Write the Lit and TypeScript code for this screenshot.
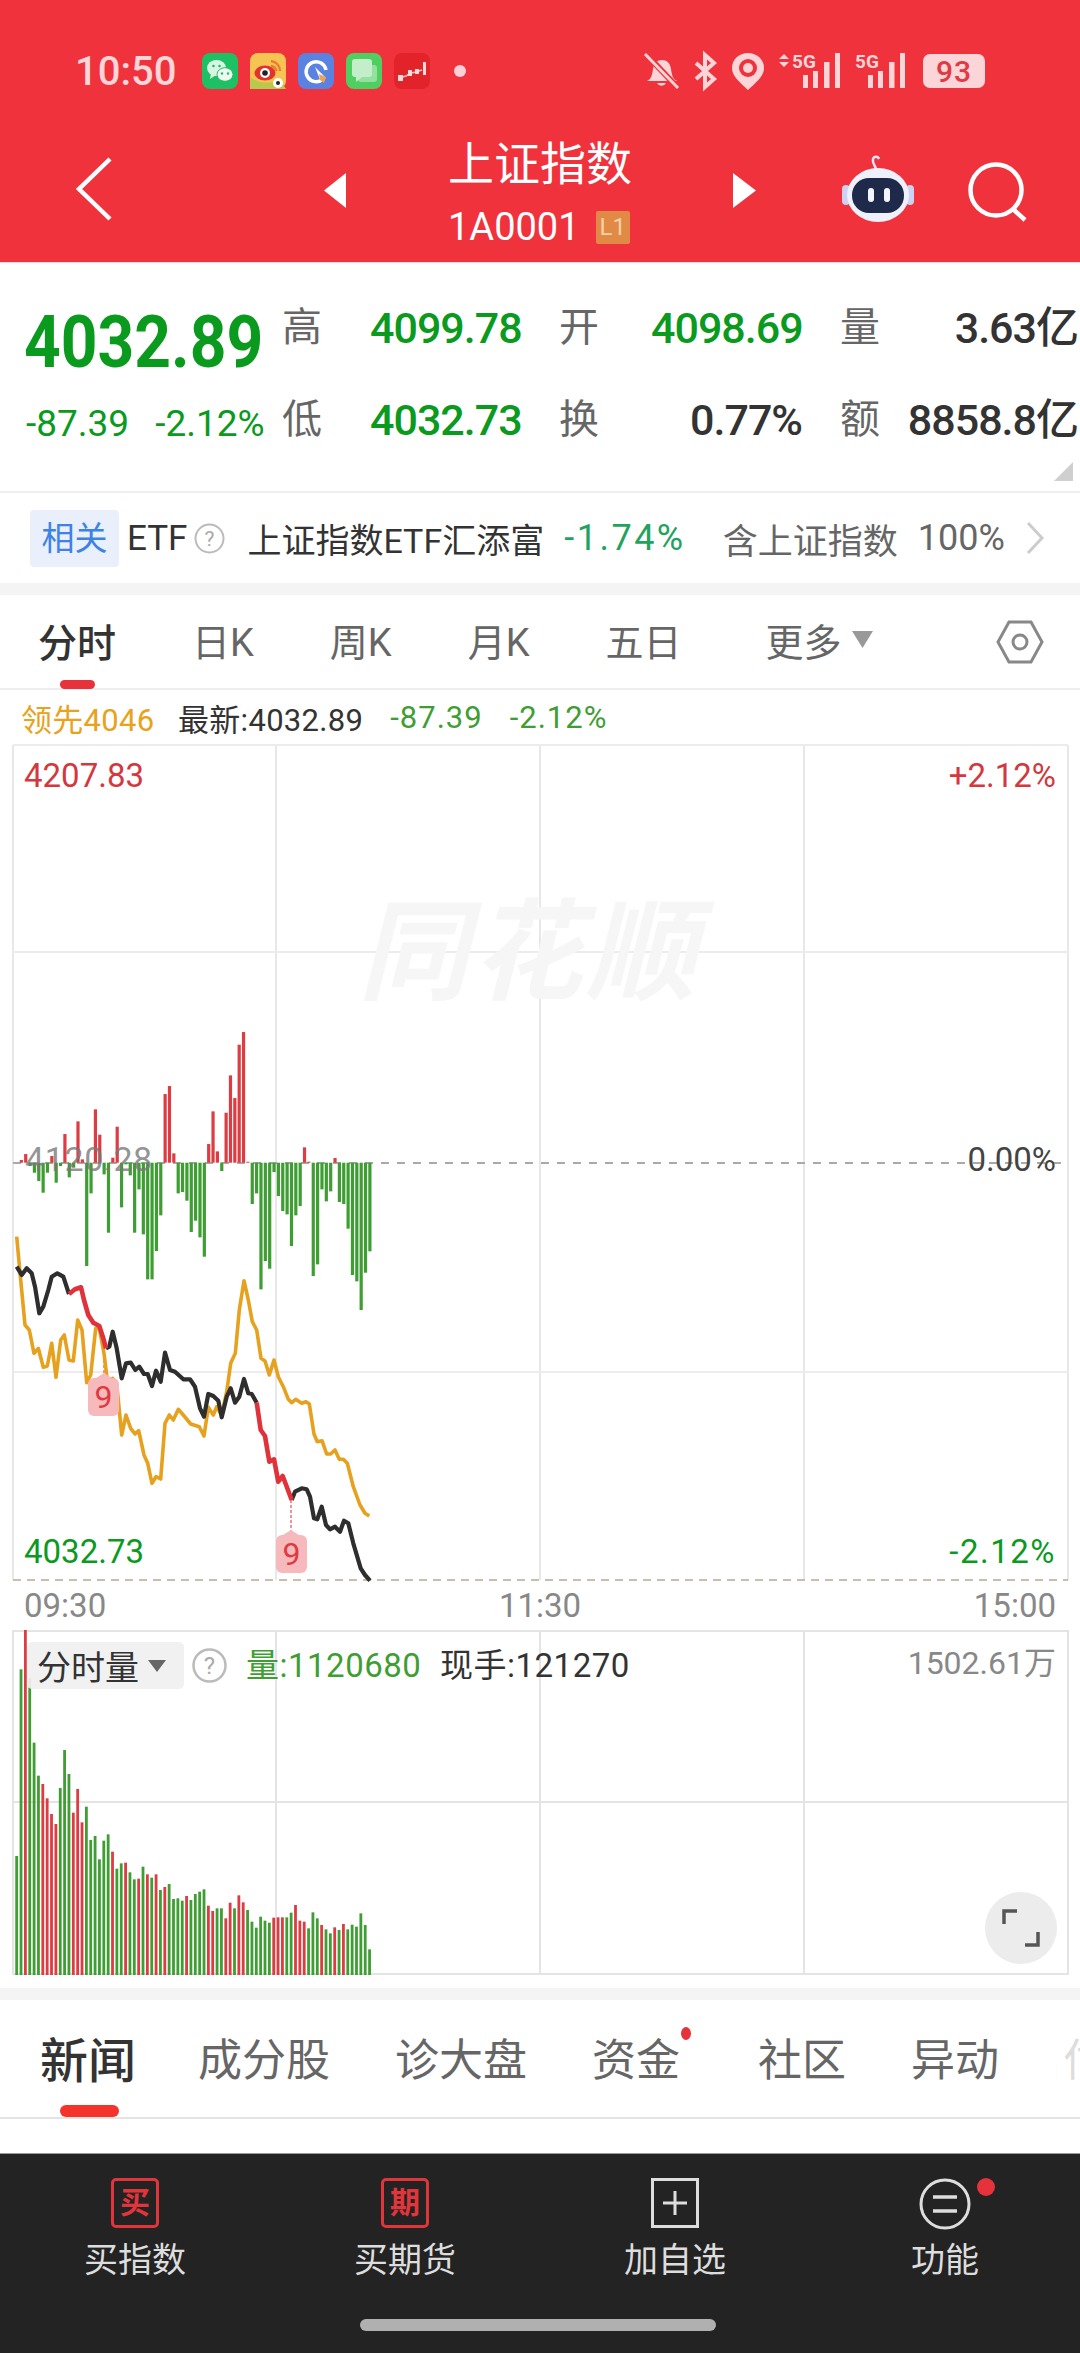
import { LitElement, html, svg, css } from 'lit';
import { customElement } from 'lit/decorators.js';

const RED = '#dc3c42';
const GREEN = '#3f9e33';

// diff bars: height in 3x zoom px, + is red, - is green
const DIFF = [0, 8, 26, -10, -30, -55, -90, -30, 20, -60, -10, 86, -44, -15, 124, 10, -310, -92, 160, 84, -35, -210, 15, 108, -134, -5, -38, -210, -80, -215, -350, -350, -265, -158, 206, 230, 28, -92, -88, -114, -208, -174, -224, -282, 56, 154, 34, -25, 150, 262, 194, 354, 392, 3, -124, -92, -380, -295, -318, -28, -100, -145, -155, -250, -158, -130, 46, 3, -340, -305, -80, -116, -86, 14, -118, -124, -198, -337, -356, -442, -330, -266];

// volume bars: top in 3x zoom px, r flags red
const VOL: [number, number][] = [[768,0],[208,0],[90,1],[235,0],[428,0],[527,0],[552,1],[595,1],[642,1],[672,1],[564,0],[450,0],[522,0],[638,1],[567,1],[667,1],[620,0],[720,0],[708,0],[778,0],[722,0],[703,0],[755,1],[806,0],[790,0],[788,1],[817,0],[838,0],[836,1],[800,0],[823,1],[833,0],[823,1],[870,0],[861,1],[852,0],[897,0],[895,0],[902,0],[888,1],[900,0],[882,0],[875,0],[868,0],[917,1],[933,1],[925,0],[925,0],[955,1],[908,1],[925,0],[886,1],[907,1],[930,0],[965,0],[983,0],[950,0],[962,0],[968,0],[953,1],[952,1],[952,1],[952,0],[938,0],[915,1],[962,1],[965,1],[985,0],[937,0],[955,0],[975,1],[988,0],[1000,0],[982,1],[990,0],[972,1],[988,0],[974,0],[980,0],[940,0],[975,0],[1048,0]];

const BLACK_A = '50,-40 65,-15 80,-35 95,-20 105,20 118,100 130,80 145,30 155,-10 172,-20 190,-10 207,42';
const RED_A = '207,42 225,28 243,22 252,60 265,105 280,128 298,138 310,175 318,205';
const BLACK_B = '318,205 328,200 338,155 350,205 365,295 378,250 392,248 406,270 418,260 432,282 443,282 456,318 468,272 482,305 495,218 510,270 525,275 550,298 570,298 585,320 600,385 612,410 625,342 640,348 655,362 665,412 680,350 692,325 705,368 718,350 732,297 745,340 755,342 770,368';
const RED_B = '770,368 782,450 795,468 808,545 822,538 835,605 848,588 875,660';
const BLACK_C = '875,660 885,635 905,625 920,628 930,650 942,715 952,718 965,680 978,735 990,748 1005,740 1020,755 1032,722 1045,730 1060,790 1082,865 1095,885 1110,902';
const LEAD = '50,-130 62,0 75,135 88,150 102,220 115,205 130,262 142,258 155,190 168,292 182,180 193,165 207,240 220,243 233,120 246,150 260,308 272,285 287,145 298,145 312,220 325,325 338,295 350,310 365,465 378,405 392,445 405,462 416,452 432,525 443,550 456,610 468,590 482,597 495,430 508,405 520,420 535,388 550,405 572,432 598,440 612,468 625,382 640,405 650,380 665,405 680,335 692,250 706,220 718,90 732,2 745,60 757,125 770,150 783,235 795,243 808,285 822,240 835,290 850,320 865,358 875,368 887,358 905,370 918,365 928,372 942,462 952,485 966,482 980,522 992,522 1005,510 1018,538 1030,538 1042,550 1060,620 1080,675 1095,700 1108,708';

const toPage = (pts: string) =>
  pts.split(' ').map((p) => {
    const [x, y] = p.split(',').map(Number);
    return `${(x / 3).toFixed(1)},${(1280 + y / 3).toFixed(1)}`;
  }).join(' ');

const barX = (i: number) => (51 + 13.07 * i) / 3;

@customElement('app-root')
export class AppRoot extends LitElement {
  static styles = css`
    :host {
      display: block;
      width: 1080px;
      height: 2353px;
      overflow: hidden;
      background: #fff;
      font-family: Roboto, 'Noto Sans CJK SC', sans-serif;
    }
    svg { display: block; overflow: visible; }

    .top { height: 262px; background: #f0323c; border-bottom: 1px solid #f6d9da; }
    .status { height: 142px; display: flex; align-items: center; color: #fbd5d7; position: relative; }
    .clock { margin-left: 75px; width: 127px; font-size: 40px; font-weight: 500; }
    .apps { display: flex; gap: 12px; }
    .dot { width: 12px; height: 12px; border-radius: 50%; background: #fbd0d8; margin-left: 24px; }
    .sys { margin-left: auto; margin-right: 95px; display: flex; align-items: center; gap: 15px; }
    .batt { margin-left: 3px; width: 62px; height: 34px; border-radius: 7px; background: #fbd5d7; color: #e03a42; font-size: 30px; font-weight: 500; text-align: center; line-height: 35px; letter-spacing: 1px; }

    .nav { height: 120px; position: relative; display: flex; align-items: flex-start; color: #fff; }
    .back { margin: 15px 0 0 76px; }
    .arrow-l { margin: 31px 0 0 212px; }
    .title { width: 284px; padding-left: 102px; box-sizing: border-box; margin-left: 0; }
    .name { font-size: 46px; line-height: 46px; margin-top: -1px; white-space: nowrap; }
    .code { display: flex; align-items: center; font-size: 38px; line-height: 38px; margin-top: 21px; white-space: nowrap; }
    .l1 { margin-left: 16px; width: 39px; height: 33px; background: #e08a45; color: #f9d0a8; border-radius: 2px; font-size: 24px; line-height: 33px; text-align: center; }
    .arrow-r { margin: 31px 0 0 103px; }
    .robot { margin: 13px 0 0 86px; }
    .search { margin: 20px 0 0 54px; }

    .quote { height: 230px; box-sizing: border-box; border-bottom: 2px solid #eee; position: relative; display: grid; grid-template-columns: 282px 88px 189px 92px 189px 1fr; grid-template-rows: 92px 92px; padding-top: 19px; align-items: center; }
    .big { display: flex; flex-direction: column; padding-left: 24px; grid-row: 1 / span 2; color: #0a9a1e; }
    .big b { font-size: 72px; line-height: 72px; font-weight: 700; margin-top: 3px; transform: scaleX(.89); transform-origin: left center; }
    .big span { display: flex; gap: 26px; font-size: 37px; line-height: 42px; margin-top: 24px; padding-left: 2px; white-space: nowrap; }
    .big em { font-style: normal; }
    .lbl { font-size: 40px; color: #666; line-height: 48px; }
    .val { font-size: 43px; line-height: 48px; font-weight: 500; letter-spacing: -1px; white-space: nowrap; }
    .up { color: #0a9a1e; }
    .dark { color: #333; }
    .val.end { text-align: right; padding-right: 38px; }
    .vol-cell { display: flex; justify-content: space-between; align-items: center; height: 48px; padding-right: 2px; }
    .corner { position: absolute; right: 7px; bottom: 10px; }

    .etf { height: 90px; display: flex; align-items: center; font-size: 34px; color: #333; white-space: nowrap; }
    .chip { margin-left: 30px; width: 89px; height: 57px; background: #e9f0fc; border-radius: 4px; color: #3d82e6; text-align: center; line-height: 57px; font-size: 33px; }
    .etf .t { margin-left: 8px; font-size: 35px; }
    .etf .q { margin: 0 22px 0 7px; }
    .etf .chg { margin-left: 20px; color: #1fa35e; font-size: 36px; letter-spacing: 2.5px; }
    .etf .sub { margin-left: 37px; color: #666; font-size: 35px; }
    .etf .pct { margin-left: 20px; color: #666; font-size: 36px; }
    .etf .more { margin-left: 21px; }

    .band { height: 12px; background: #f4f4f4; }

    .tabs { height: 95px; box-sizing: border-box; border-bottom: 2px solid #eee; display: flex; align-items: center; position: relative; font-size: 38px; color: #666; padding: 0 0 4px 38px; gap: 76px; }
    .tabs .on { color: #333; font-size: 39px; font-weight: 500; }
    .tabs .more { display: flex; align-items: center; gap: 10px; margin-left: 8px; }
    .bar { position: absolute; background: #e6323a; border-radius: 5px; }
    .tabs .bar { left: 60px; bottom: -1px; width: 35px; height: 9px; }
    .tabs .gear { position: absolute; left: 997px; top: 24px; }

    .legend { height: 55px; display: flex; align-items: center; font-size: 31px; padding-left: 21px; color: #333; white-space: nowrap; letter-spacing: 0.3px; }
    .legend .lead { color: #e8a21c; width: 157px; }
    .legend .g { color: #3f9e33; margin-left: 27px; letter-spacing: 1px; }

    .chart { position: relative; }
    .mark { position: absolute; font-size: 33px; line-height: 38px; white-space: nowrap; }
    .mark.r { right: 24px; }
    .mark.l { left: 24px; }
    .hi { color: #d2383e; }
    .lo { color: #0a9a1e; }
    .mark.spread { letter-spacing: 1.5px; }
    .zero { color: #444; top: 396px; }
    .open { left: 25px; top: 395px; font-size: 34px; color: rgba(120, 120, 120, .8); letter-spacing: 0.6px; }
    .wm { position: absolute; left: 358px; top: 147px; font-size: 110px; line-height: 124px; font-weight: 700; font-style: italic; color: #f6f6f6; letter-spacing: 4px; }
    .badge { position: absolute; width: 31px; height: 38px; background: #f6babc; border-radius: 6px; color: #e0393f; font-size: 32px; line-height: 38px; text-align: center; }

    .times { height: 49px; display: flex; justify-content: space-between; align-items: center; padding: 0 24px; font-size: 33px; color: #888; }

    .chart .pick { position: absolute; left: 27px; top: 12px; width: 157px; height: 47px; box-sizing: border-box; background: rgba(240, 240, 240, .92); border-radius: 5px; display: flex; align-items: center; padding-left: 10px; gap: 9px; font-size: 34px; color: #333; }
    .chart .help { position: absolute; left: 192px; top: 18px; }
    .chart .stat { position: absolute; top: 16px; font-size: 33px; line-height: 40px; white-space: nowrap; letter-spacing: 0.5px; }
    .chart .max { right: 24px; color: #888; font-size: 32px; letter-spacing: 0; top: 13px; }
    .chart .zoom { position: absolute; left: 985px; top: 262px; width: 72px; height: 72px; border-radius: 50%; background: #ececec; display: flex; align-items: center; justify-content: center; }

    .pad { height: 12px; }
    .news { height: 119px; box-sizing: border-box; border-bottom: 2px solid #e4e4e4; position: relative; display: flex; align-items: center; font-size: 44px; color: #666; white-space: nowrap; padding: 0 0 3px 40px; overflow: hidden; }
    .news .on { font-size: 48px; font-weight: 500; color: #333; margin-right: 62px; }
    .news .bar { left: 60px; bottom: 0; width: 59px; height: 12px; background: #f5332d; border-radius: 6px; }
    .news span { margin-right: 65px; }
    .news .fund { position: relative; margin-right: 78px; }
    .news .fund i { position: absolute; left: 89px; top: 2px; width: 10px; height: 13px; background: #e6323a; border-radius: 50%; }
    .news .fade { color: #ddd; margin: 0; }
    .gap { height: 34px; }

    .dock { height: 200px; background: #232323; position: relative; display: grid; grid-template-columns: repeat(4, 270px); border-top: 1px solid #999; box-sizing: border-box; }
    .item { display: flex; flex-direction: column; align-items: center; color: #ddd; font-size: 34px; line-height: 40px; }
    .ic { height: 56px; margin-top: 24px; margin-bottom: 6px; position: relative; }
    .box { box-sizing: border-box; width: 48px; height: 50px; border: 3px solid #e0353b; border-radius: 5px; color: #e0353b; font-size: 30px; line-height: 43px; font-weight: 700; text-align: center; }
    .red-dot { position: absolute; left: 58px; top: 0; width: 18px; height: 18px; border-radius: 50%; background: #e6323a; }
    .home { position: absolute; left: 360px; top: 165px; width: 356px; height: 12px; border-radius: 6px; background: #b0b0b0; }
  `;

  private _apps() {
    return html`<div class="apps">
      <svg width="36" height="36" viewBox="0 0 36 36"><rect width="36" height="36" rx="8" fill="#1ec064"/><ellipse cx="14.500" cy="15" rx="9.500" ry="8" fill="#d9f5e2"/><path d="M9 20 8 26 14 22z" fill="#d9f5e2"/><ellipse cx="23" cy="21.500" rx="8" ry="6.800" fill="#eefaf1" stroke="#1ec064"/><circle cx="11.500" cy="13" r="1.300" fill="#1ec064"/><circle cx="17.500" cy="13" r="1.300" fill="#1ec064"/><circle cx="20" cy="20.500" r="1.200" fill="#1ec064"/><circle cx="26" cy="20.500" r="1.200" fill="#1ec064"/></svg>
      <svg width="36" height="36" viewBox="0 0 36 36"><rect width="36" height="36" rx="8" fill="#f6c453"/><path d="M0 24C8 30 20 32 30 26L36 36H0Z" fill="#b8c94e"/><path d="M21 8a10 10 0 0 1 9 10M21 13a5 5 0 0 1 5 5" stroke="#ef7b2e" stroke-width="2.400" fill="none"/><ellipse cx="15" cy="20" rx="10.500" ry="7.500" fill="#e4332d"/><circle cx="15" cy="20" r="5" fill="#fff"/><circle cx="15" cy="20" r="2.800" fill="#222"/><circle cx="28" cy="30" r="5" fill="#fff"/><circle cx="28" cy="30" r="2" fill="#222"/></svg>
      <svg width="36" height="36" viewBox="0 0 36 36"><rect width="36" height="36" rx="8" fill="#5a82e0"/><path d="M25 26a10 10 0 1 1 3-9" fill="none" stroke="#fff" stroke-width="3.500"/><path d="M17 14 28 25 23 29z" fill="#fff"/><path d="M21 21 28 24 26 30 22 27z" fill="#eda451"/></svg>
      <svg width="36" height="36" viewBox="0 0 36 36"><rect width="36" height="36" rx="8" fill="#4fcf5f"/><rect x="12" y="12" width="19" height="17" rx="3" fill="#93e0a0"/><rect x="6" y="6" width="20" height="18" rx="3" fill="#c3eec9"/><path d="M10 24v5l6-5z" fill="#c3eec9"/></svg>
      <svg width="36" height="36" viewBox="0 0 36 36"><rect width="36" height="36" rx="8" fill="#e3232a"/><path d="M5 25 12 23 17 20 22 19 28 17" stroke="#f6c2c2" stroke-width="1.500" fill="none"/><rect x="4" y="22" width="5" height="6" fill="#fbdcdc"/><rect x="14" y="17" width="4" height="6" fill="#fbdcdc"/><rect x="21" y="16" width="4" height="5" fill="#fbdcdc"/><rect x="29" y="9" width="3" height="13" fill="#fbdcdc"/></svg>
    </div>`;
  }

  private _signal(x: number) {
    const c = '#fbd5d7';
    return svg`<rect x="${x}" y="22" width="5" height="13" fill="${c}"/><rect x="${x + 10}" y="18" width="5" height="17" fill="${c}"/><rect x="${x + 21}" y="9" width="5.500" height="26" fill="${c}"/><rect x="${x + 32}" y="0" width="5" height="35" fill="${c}"/>`;
  }

  private _sysIcons() {
    const c = '#fbd5d7';
    return html`<div class="sys">
      <svg width="35" height="36" viewBox="0 0 35 36" fill="none"><path d="M3 28c4-2 5-5 6-12 1-6 4-9 9-9s8 3 9 9c1 7 2 10 6 12z" fill="${c}"/><path d="M13 30a5 5 0 0 0 9 0z" fill="${c}"/><path d="M1 0 34 35" stroke="#f0323c" stroke-width="6"/><path d="M1 1 34 35" stroke="${c}" stroke-width="3"/></svg>
      <svg width="23" height="36" viewBox="0 0 23 36" fill="none"><path d="M2 10 20 26 11 34V2l9 8L2 26" stroke="${c}" stroke-width="4"/></svg>
      <svg width="32" height="37" viewBox="0 0 32 37"><path d="M16 0C7 0 0 6.500 0 15c0 9 9 15 16 22C23 30 32 24 32 15 32 6.500 25 0 16 0z" fill="${c}"/><circle cx="16" cy="15" r="9" fill="#f0323c"/><circle cx="16" cy="15" r="5" fill="${c}"/></svg>
      <svg width="61" height="36" viewBox="0 0 61 36"><path d="M0 6 5 1 10 6zM0 9 5 14 10 9z" fill="${c}"/><text x="13" y="15" font-size="19" font-weight="700" fill="${c}" font-family="Roboto">5G</text>${this._signal(24)}</svg>
      <svg width="50" height="36" viewBox="0 0 50 36"><text x="0" y="15" font-size="19" font-weight="700" fill="${c}" font-family="Roboto">5G</text>${this._signal(13)}</svg>
      <div class="batt">93</div>
    </div>`;
  }

  private _priceSvg() {
    const vx = [13, 276, 540, 804, 1068];
    const hy = [745, 952, 1372];
    return html`<svg width="1080" height="836" viewBox="0 745 1080 836">
      ${vx.map((x) => svg`<line x1="${x}" y1="745" x2="${x}" y2="1580" stroke="#e8e8e8" stroke-width="2"/>`)}
      ${hy.map((y) => svg`<line x1="13" y1="${y}" x2="1068" y2="${y}" stroke="#ececec" stroke-width="2"/>`)}
      <line x1="13" y1="1163" x2="1068" y2="1163" stroke="#aaa" stroke-width="2" stroke-dasharray="8 8"/>
      <line x1="13" y1="1580" x2="1068" y2="1580" stroke="#c9bdb0" stroke-width="2" stroke-dasharray="8 6"/>
      ${DIFF.map((d, i) => d === 0 ? null : svg`<rect x="${barX(i) - 1.6}" y="${d > 0 ? 1162.7 - d / 3 : 1162.7}" width="3.2" height="${Math.abs(d) / 3}" fill="${d > 0 ? RED : GREEN}"/>`)}
      <line x1="104" y1="1350" x2="104" y2="1378" stroke="#e8707a" stroke-width="1.500" stroke-dasharray="3 2"/>
      <line x1="291" y1="1500" x2="291" y2="1535" stroke="#e8707a" stroke-width="1.500" stroke-dasharray="3 2"/>
      <polyline points="${toPage(LEAD)}" fill="none" stroke="#e6a11f" stroke-width="3.600" stroke-linejoin="round"/>
      ${[BLACK_A, BLACK_B, BLACK_C].map((p) => svg`<polyline points="${toPage(p)}" fill="none" stroke="#2e2e2e" stroke-width="4.200" stroke-linejoin="round"/>`)}
      ${[RED_A, RED_B].map((p) => svg`<polyline points="${toPage(p)}" fill="none" stroke="#e0323a" stroke-width="4.600" stroke-linejoin="round"/>`)}
      <path d="M96 1378 104 1373 112 1378zM283 1535 291 1530 299 1535z" fill="#f6babc"/>
    </svg>`;
  }

  private _volSvg() {
    const vx = [13, 276, 540, 804, 1068];
    return html`<svg width="1080" height="346" viewBox="0 1630 1080 346">
      ${vx.map((x) => svg`<line x1="${x}" y1="1630" x2="${x}" y2="1975" stroke="#e4e4e4" stroke-width="2"/>`)}
      ${[1631, 1802, 1974].map((y) => svg`<line x1="13" y1="${y}" x2="1068" y2="${y}" stroke="#e4e4e4" stroke-width="2"/>`)}
      ${VOL.map(([top, r], i) => svg`<rect x="${(50 + 13.07 * i) / 3 - 1.4}" y="${1600 + top / 3}" width="2.800" height="${(1125 - top) / 3}" fill="${r ? RED : GREEN}"/>`)}
    </svg>`;
  }

  render() {
    return html`
      <div class="top">
        <div class="status">
          <div class="clock">10:50</div>
          ${this._apps()}
          <div class="dot"></div>
          ${this._sysIcons()}
        </div>
        <div class="nav">
          <svg class="back" width="36" height="64" viewBox="0 0 36 64" fill="none"><path d="M34 2 3 32 34 62" stroke="#fff" stroke-width="4.500"/></svg>
          <svg class="arrow-l" width="22" height="35" viewBox="0 0 22 35"><path d="M22 0V35L0 17.500z" fill="#fff"/></svg>
          <div class="title">
            <div class="name">上证指数</div>
            <div class="code">1A0001<span class="l1">L1</span></div>
          </div>
          <svg class="arrow-r" width="23" height="35" viewBox="0 0 23 35"><path d="M0 0V35L23 17.500z" fill="#fff"/></svg>
          <svg class="robot" width="72" height="68" viewBox="0 0 72 68" fill="none">
            <path d="M34 14c-1-4-4-6-3-10 1-3 5-3 6 0" stroke="#e9e4f7" stroke-width="2.500"/>
            <rect x="0" y="30" width="8" height="20" rx="4" fill="#cdd1f2"/><rect x="64" y="30" width="8" height="20" rx="4" fill="#cdd1f2"/>
            <ellipse cx="36" cy="40" rx="31" ry="27" fill="#eef0fb"/>
            <rect x="10" y="23" width="52" height="35" rx="17" fill="#1f2a4a"/>
            <rect x="26" y="33" width="6" height="14" rx="3" fill="#f4f6ff"/><rect x="42" y="33" width="6" height="14" rx="3" fill="#f4f6ff"/>
          </svg>
          <svg class="search" width="60" height="60" viewBox="0 0 60 60" fill="none"><circle cx="28" cy="28" r="25.500" stroke="#fff" stroke-width="4.500"/><path d="M45 47 57 58" stroke="#fff" stroke-width="4.500"/></svg>
        </div>
      </div>

      <div class="quote">
        <div class="big">
          <b>4032.89</b>
          <span><em>-87.39</em><em>-2.12%</em></span>
        </div>
        <div class="lbl">高</div><div class="val up">4099.78</div>
        <div class="lbl">开</div><div class="val up end">4098.69</div>
        <div class="vol-cell"><span class="lbl">量</span><span class="val dark">3.63亿</span></div>
        <div class="lbl">低</div><div class="val up">4032.73</div>
        <div class="lbl">换</div><div class="val dark end">0.77%</div>
        <div class="vol-cell"><span class="lbl">额</span><span class="val dark">8858.8亿</span></div>
        <svg class="corner" width="19" height="19" viewBox="0 0 19 19"><path d="M19 0V19H0z" fill="#cfcfcf"/></svg>
      </div>

      <div class="etf">
        <div class="chip">相关</div>
        <span class="t">ETF</span>
        <svg class="q" width="31" height="31" viewBox="0 0 31 31" fill="none"><circle cx="15.500" cy="15.500" r="14" stroke="#bbb" stroke-width="2"/><text x="15.500" y="23" text-anchor="middle" font-size="21" fill="#aaa" font-family="Roboto">?</text></svg>
        <span>上证指数ETF汇添富</span>
        <span class="chg">-1.74%</span>
        <span class="sub">含上证指数</span>
        <span class="pct">100%</span>
        <svg class="more" width="18" height="34" viewBox="0 0 18 34" fill="none"><path d="M2 2 16 17 2 32" stroke="#ccc" stroke-width="3"/></svg>
      </div>
      <div class="band"></div>

      <div class="tabs">
        <span class="on">分时</span><span>日K</span><span>周K</span><span>月K</span><span>五日</span>
        <span class="more">更多<svg width="21" height="17" viewBox="0 0 21 17"><path d="M0 0H21L10.500 17z" fill="#999"/></svg></span>
        <svg class="gear" width="46" height="46" viewBox="0 0 46 46" fill="none"><path d="M12 3H34L45 23 34 43H12L1 23z" stroke="#888" stroke-width="3"/><circle cx="23" cy="23" r="7" stroke="#888" stroke-width="3"/></svg>
        <div class="bar"></div>
      </div>

      <div class="legend">
        <span class="lead">领先4046</span>
        <span>最新:4032.89</span>
        <span class="g">-87.39</span>
        <span class="g">-2.12%</span>
      </div>

      <div class="chart">
        <div class="wm">同花顺</div>
        ${this._priceSvg()}
        <div class="mark l hi" style="top:12px">4207.83</div>
        <div class="mark r hi" style="top:12px">+2.12%</div>
        <div class="mark open">4120.28</div>
        <div class="mark r zero">0.00%</div>
        <div class="mark l lo" style="top:788px">4032.73</div>
        <div class="mark r lo spread" style="top:788px">-2.12%</div>
        <div class="badge" style="left:88px;top:633px">9</div>
        <div class="badge" style="left:276px;top:790px">9</div>
      </div>

      <div class="times"><span>09:30</span><span>11:30</span><span>15:00</span></div>

      <div class="chart">
        ${this._volSvg()}
        <div class="pick">分时量<svg width="18" height="12" viewBox="0 0 18 12"><path d="M0 0H18L9 12z" fill="#666"/></svg></div>
        <svg class="help" width="35" height="35" viewBox="0 0 35 35" fill="none"><circle cx="17.500" cy="17.500" r="16" stroke="#bbb" stroke-width="2.500"/><text x="17.500" y="26" text-anchor="middle" font-size="24" fill="#aaa" font-family="Roboto">?</text></svg>
        <div class="stat" style="left:246px;color:#3f9e33">量:1120680</div>
        <div class="stat" style="left:440px;color:#333">现手:121270</div>
        <div class="stat max">1502.61万</div>
        <div class="zoom"><svg width="38" height="38" viewBox="0 0 38 38" fill="none"><path d="M2 15V2H15M23 36H36V23" stroke="#555" stroke-width="3.500"/></svg></div>
      </div>

      <div class="pad"></div>
      <div class="band"></div>

      <div class="news">
        <span class="on">新闻</span>
        <span>成分股</span><span>诊大盘</span>
        <span class="fund">资金<i></i></span>
        <span>社区</span><span>异动</span>
        <span class="fade">估值</span>
        <div class="bar"></div>
      </div>
      <div class="gap"></div>

      <div class="dock">
        <div class="item"><div class="ic"><div class="box">买</div></div>买指数</div>
        <div class="item"><div class="ic"><div class="box">期</div></div>买期货</div>
        <div class="item"><div class="ic"><svg width="48" height="50" viewBox="0 0 48 50" fill="none"><rect x="1.500" y="1.500" width="45" height="47" stroke="#ddd" stroke-width="3"/><path d="M24 13V37M12 25H36" stroke="#ddd" stroke-width="3"/></svg></div>加自选</div>
        <div class="item"><div class="ic"><svg width="52" height="52" viewBox="0 0 52 52" fill="none"><circle cx="26" cy="26" r="24" stroke="#ddd" stroke-width="3"/><path d="M14 19H38M14 33H38" stroke="#ddd" stroke-width="3.500"/></svg><div class="red-dot"></div></div>功能</div>
        <div class="home"></div>
      </div>
    `;
  }
}
